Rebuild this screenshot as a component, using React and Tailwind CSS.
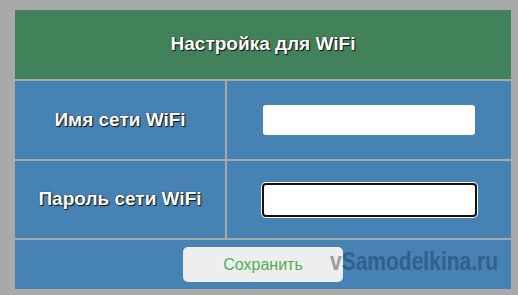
export default function App() {
  const label = "font-['Liberation_Sans',Arial,sans-serif] font-bold text-[19px] text-white [text-shadow:1px_1px_1px_#111,0_0_1px_#111]";

  return (
    <div className="h-[295px] w-[518px] bg-[#a9a9a9] pt-[10px] pl-[15px] pr-[7px] overflow-hidden">
      <div className="relative grid grid-cols-[210px_284px] grid-rows-[69px_78px_77px_49px] gap-[2px] bg-[#a9a9a9]">
        <div className={`col-span-2 bg-[#42825a] flex items-center justify-center ${label}`}>
          Настройка для WiFi
        </div>

        <div className={`bg-[#4682b4] flex items-center justify-center ${label}`}>
          Имя сети WiFi
        </div>
        <div className="bg-[#4682b4] flex items-center justify-center">
          <input type="text" className="w-[212px] h-[30px] bg-white rounded-[3px] outline-none" />
        </div>

        <div className={`bg-[#4682b4] flex items-center justify-center ${label}`}>
          Пароль сети WiFi
        </div>
        <div className="bg-[#4682b4] flex items-center justify-center">
          <input type="password" className="w-[215px] h-[34px] bg-white rounded-[4px] border-2 border-[#111] ring-1 ring-white outline-none" />
        </div>

        <div className="col-span-2 bg-[#4682b4] flex items-center justify-center">
          <button className="w-[160px] h-[35px] bg-[#eeeeee] rounded-[5px] text-[#4caf50] text-[16px] font-['Liberation_Sans',Arial,sans-serif]">
            Сохранить
          </button>
        </div>

        <div className="absolute left-[315px] top-[239px] flex items-baseline leading-none font-['Liberation_Sans',sans-serif] font-bold text-[25px] opacity-85 scale-x-[0.84] origin-left pointer-events-none">
          <span className="text-[#8a8f94]">v</span>
          <span className="text-[#2f5b82]">Samodelkina.ru</span>
        </div>
      </div>
    </div>
  );
}
